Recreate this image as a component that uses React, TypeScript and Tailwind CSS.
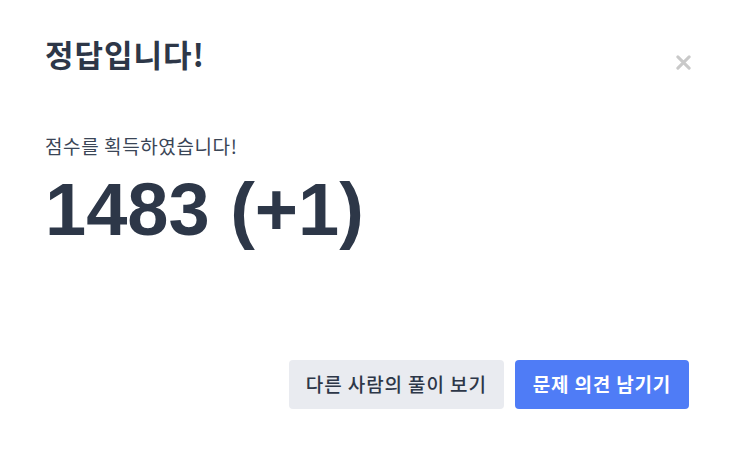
import React from 'react';

const font = { fontFamily: '"Noto Sans CJK KR", "Noto Sans", sans-serif' };

export default function App() {
    return (
        <div className="w-[742px] h-[455px] bg-white pl-[45px] pr-[53px] flex flex-col text-[#2d3748]" style={font}>
            {/* Header */}
            <div className="flex items-start justify-between pt-[34px]">
                <h1 className="text-[31px] font-bold leading-[40px] tracking-[1px]">정답입니다!</h1>
                <button className="mt-[20px] mr-[-2px] w-[16px] h-[16px] flex items-center justify-center text-[#c9c9c9]">
                    <svg viewBox="0 0 16 16" className="w-[15px] h-[15px]">
                        <path d="M2 2 L14 14 M14 2 L2 14" stroke="currentColor" strokeWidth="3.2" strokeLinecap="round" />
                    </svg>
                </button>
            </div>

            {/* Body */}
            <div className="mt-[62px]">
                <p className="text-[19px] leading-[20px] text-[#3a4556] tracking-[0.6px]">점수를 획득하였습니다!</p>
                <div className="mt-[12px] text-[74px] font-bold leading-[84px]" style={{ fontFamily: '"Liberation Sans", Arial, sans-serif' }}>
                    1483 (+1)
                </div>
            </div>

            <div className="flex-1" />

            {/* Footer */}
            <div className="flex justify-end gap-[11px] mb-[46px]">
                <button className="h-[49px] px-[17px] rounded-[4px] bg-[#e9ebf0] text-[19px] font-medium text-[#2d3748] tracking-[0.9px]">
                    다른 사람의 풀이 보기
                </button>
                <button className="h-[49px] px-[18px] rounded-[4px] bg-[#4f7cf6] text-[19px] font-bold text-white tracking-[0.8px]">
                    문제 의견 남기기
                </button>
            </div>
        </div>
    );
}
